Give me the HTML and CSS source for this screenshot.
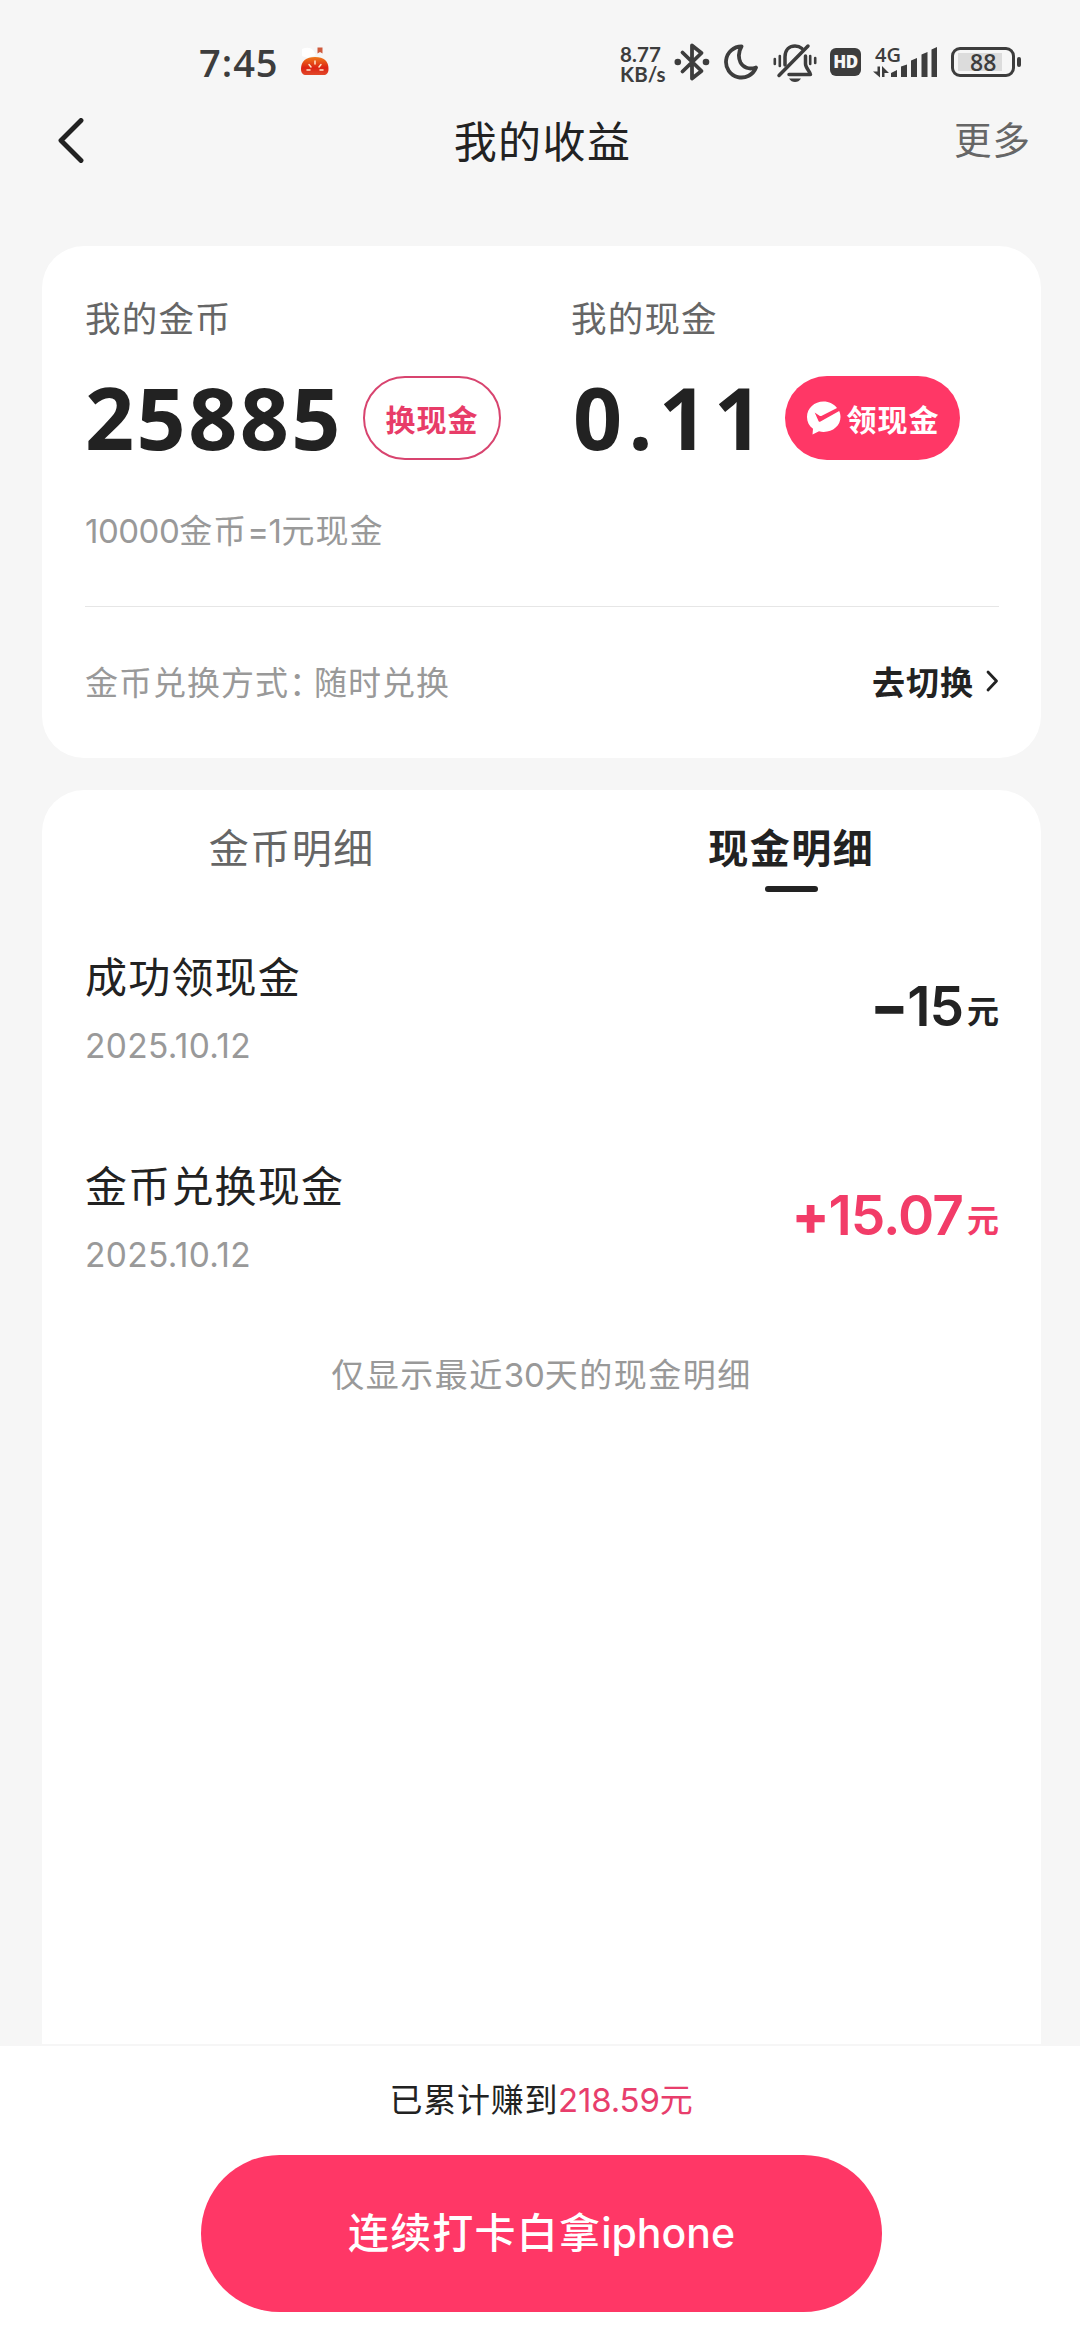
FILE: index.html
```html
<!DOCTYPE html>
<html lang="zh-CN">
<head>
<meta charset="utf-8">
<title>我的收益</title>
<link rel="stylesheet" href="styles.css">
</head>
<body>
<div class="screen">
  <header class="status">
    <div class="status-left">
      <span class="clock">7:45</span>
      <svg class="pumpkin" width="30" height="30" viewBox="0 0 30 30">
        <defs><linearGradient id="pk" x1="0" y1="0" x2="0" y2="1"><stop offset="0" stop-color="#f07a1c"/><stop offset=".6" stop-color="#dc2414"/><stop offset="1" stop-color="#e2492a"/></linearGradient></defs>
        <path d="M2 2q7-3 11 1l3 5-8 3-6-2z" fill="#fff"/>
        <path d="M17.500 0.500h5v6l-2.500-1.500-2.500 1.500z" fill="#cf5a3c"/>
        <path d="M1 22C1 14 6 10 15 10s13.500 4 13.500 12c0 4-2 6-5 6H6c-3 0-5-2-5-6z" fill="url(#pk)"/>
        <path d="M7 23h3M9 17.500l2 2.500M15 14v3M21 17.500l-2 2.500M23 23h-3" stroke="#ffe6cc" stroke-width="1.500" fill="none" stroke-linecap="round"/>
      </svg>
    </div>
    <div class="status-right">
      <div class="speed"><span>8.77</span><span>KB/s</span></div>
      <svg class="i-bt" width="36" height="40" viewBox="0 0 36 40"><path d="M8.500 10.500L27.500 29 18 36.500V3.500L27.500 11 8.500 29.500" fill="none" stroke="#3d3d3d" stroke-width="3.800" stroke-linejoin="round" stroke-linecap="round"/><circle cx="3.800" cy="20" r="3.300" fill="#3d3d3d"/><circle cx="32" cy="20" r="3.300" fill="#3d3d3d"/></svg>
      <svg class="i-moon" width="34" height="36" viewBox="0 0 34 36"><path d="M17.500 2.500A15.500 15.500 0 1 0 32 23.500C25 26 19 23.500 16.500 18.500 14 13 14.500 7.500 17.500 2.500z" fill="none" stroke="#3d3d3d" stroke-width="3.800" stroke-linejoin="round"/></svg>
      <svg class="i-bell" width="44" height="40" viewBox="0 0 44 40"><g fill="none" stroke="#3d3d3d" stroke-width="3.500" stroke-linecap="round" stroke-linejoin="round"><path d="M12 22V14C12 6 17 3 22 3c3 0 5 .8 7 2.500M32.500 13v8c0 4 5 8 5 10.500H16"/><path d="M35 3L6 32.500"/><path d="M1.800 16v5M6.800 13v10M37.200 13v8M42.200 15v5" stroke-width="2.600"/></g><path d="M16 35.500h12c-1.500 2.500-3.500 3.500-6 3.500s-4.500-1-6-3.500z" fill="#3d3d3d"/></svg>
      <span class="hd">HD</span>
      <div class="signal">
        <span class="net">4G</span>
        <svg width="65" height="31" viewBox="0 0 65 31"><g fill="#3d3d3d"><path d="M4.500 19.500h2.500v11L0 24.500h4.500zM9 30h2.500v-4H16L9 19z"/><path d="M18 26l6-3v7h-6zM28 19.500l6-2V30h-6zM38 13.500l6-2.500V30h-6zM48.500 7.500l6-2.500V30h-6zM58.500 2.500L64 0v30h-5.500z"/></g></svg>
      </div>
      <div class="battery"><span class="battery-shell"><span class="battery-level">88</span></span><i class="battery-nub"></i></div>
    </div>
  </header>

  <nav class="nav">
    <svg class="back" width="27" height="45" viewBox="0 0 27 45"><path d="M24 2.500L4 22.500l20 20" fill="none" stroke="#222" stroke-width="4.900" stroke-linecap="round" stroke-linejoin="round"/></svg>
    <h1 class="nav-title">我的收益</h1>
    <span class="nav-more">更多</span>
  </nav>

  <section class="card wallet">
    <div class="balances">
      <div class="balance coins">
        <div class="label">我的金币</div>
        <div class="figure"><span class="num">25885</span><span class="pill outline">换现金</span></div>
      </div>
      <div class="balance cash">
        <div class="label">我的现金</div>
        <div class="figure"><span class="num">0.11</span><span class="pill solid">
          <svg width="36" height="36" viewBox="0 0 36 36"><path d="M17.500 1.500C8.500 1.500 1 8 1 17c0 5 2.200 9 6 11.800L6.500 34.500l6.500-3.200c1.500.4 3 .6 4.500.6C27 32 34.500 25.500 34.500 17c0-2.200-.5-4.200-1.300-6L14.500 21.500c-.9.5-1.500.3-2-.6L8.700 12.500l4.800 3.300c.6.4 1.200.4 1.800.1L31 8C28 4 23 1.500 17.500 1.500z" fill="#fff"/></svg>领现金</span></div>
      </div>
    </div>
    <p class="rate"><span class="digits">10000</span>金币<span class="digits">=1</span>元现金</p>
    <div class="mode">
      <span class="mode-text">金币兑换方式<span class="colon">：</span>随时兑换</span>
      <span class="switch">去切换<svg width="13" height="22" viewBox="0 0 13 22"><path d="M2 2l8.500 9L2 20" fill="none" stroke="#222" stroke-width="2.800" stroke-linecap="round" stroke-linejoin="round"/></svg></span>
    </div>
  </section>

  <section class="card details">
    <div class="tabs"><span class="tab">金币明细</span><span class="tab active">现金明细</span></div>
    <ul class="records">
      <li class="record">
        <div><div class="record-title">成功领现金</div><div class="record-date">2025.10.12</div></div>
        <div class="amount"><span class="value"><span class="sign">−</span>15</span><span class="unit">元</span></div>
      </li>
      <li class="record">
        <div><div class="record-title">金币兑换现金</div><div class="record-date">2025.10.12</div></div>
        <div class="amount plus"><span class="value"><span class="sign">+</span>15.07</span><span class="unit">元</span></div>
      </li>
    </ul>
    <p class="note">仅显示最近<span class="digits">30</span>天的现金明细</p>
  </section>

  <footer class="footer">
    <p class="total">已累计赚到<em><span class="digits">218.59</span>元</em></p>
    <button class="cta">连续打卡白拿<span class="latin">iphone</span></button>
  </footer>
</div>
</body>
</html>
```

FILE: styles.css
```css
* { box-sizing: border-box; margin: 0; padding: 0; }
body {
  width: 1080px;
  background: #f6f6f6;
  color: #222;
  font-family: Inter, "Noto Sans CJK SC", sans-serif;
}
svg { display: block; flex: none; }
.screen { display: flex; flex-direction: column; height: 2340px; overflow: hidden; }
.digits { letter-spacing: -.2px; }

/* status bar */
.status {
  height: 100px; flex: none;
  display: flex; justify-content: space-between;
  padding: 0 59px 0 199px;
  color: #3d3d3d;
}
.status-left { display: flex; padding-top: 47px; }
.clock { font: 650 38px/30px "Open Sans", sans-serif; width: 101px; letter-spacing: 1px; }
.status-right { display: flex; padding-top: 42px; }
.speed { width: 54px; padding-top: 2px; font: 700 20.5px/20px Lato, sans-serif; letter-spacing: .1px; }
.speed span { display: block; }
.i-moon { margin: 2px 0 0 14px; }
.i-bell { margin: 1px 0 0 15px; }
.hd {
  margin: 6px 0 0 13px; width: 31px; height: 28px; border-radius: 6px;
  background: #3d3d3d; color: #f6f6f6; text-align: center;
  font: 800 17px/28px "Open Sans", sans-serif; letter-spacing: -.5px;
}
.signal { display: grid; margin: 5px 0 0 12px; }
.signal > * { grid-area: 1 / 1; }
.net { font: 600 20px/16px "Open Sans", sans-serif; padding-left: 2px; }
.battery { display: flex; align-items: center; height: 30px; margin: 5px 0 0 13px; gap: 2px; }
.battery-shell { width: 64px; height: 30px; border: 3px solid #3d3d3d; border-radius: 9px; padding: 3px 10px 3px 4px; }
.battery-level { display: block; height: 18px; background: #dcdcdc; padding-left: 12px; font: 600 23px/19px "Open Sans", sans-serif; }
.battery-nub { width: 4px; height: 10px; border-radius: 2px; background: #3d3d3d; }

/* title bar */
.nav {
  height: 146px; flex: none;
  display: grid; grid-template-columns: 1fr auto 1fr; align-items: start;
  padding: 0 49px 0 57px;
}
.back { margin-top: 18px; }
.nav-title { font-size: 43px; font-weight: 400; line-height: 60px; letter-spacing: 1.4px; padding: 12px 3px 0 0; }
.nav-more { justify-self: end; font-size: 37.500px; line-height: 50px; color: #666; letter-spacing: 1px; padding-top: 16px; }

/* cards */
.card { margin: 0 39px 0 42px; background: #fff; border-radius: 42px; flex: none; padding: 0 42px 0 43px; }
.wallet { height: 512px; }
.balances { display: grid; grid-template-columns: 486px 1fr; padding-top: 49px; }
.label { font-size: 35.500px; line-height: 50px; letter-spacing: 1.2px; color: #666; }
.figure { display: flex; align-items: center; margin-top: 31px; height: 84px; }
.num { font: 700 86px/82px "Open Sans", sans-serif; height: 84px; letter-spacing: 2.400px; width: 278px; }
.cash .num { letter-spacing: 6px; padding-left: 2px; width: 214px; }
.pill { display: flex; align-items: center; justify-content: center; height: 84px; border-radius: 42px; font-size: 30px; font-weight: 700; letter-spacing: 1px; }
.outline { width: 138px; border: 2px solid #d8446f; color: #e83c68; }
.solid { width: 175px; background: #ff3766; color: #fff; gap: 5px; }
.rate { margin-top: 46px; font-size: 33px; line-height: 50px; color: #999; letter-spacing: 1px; }
.rate .digits { letter-spacing: -.5px; }
.mode { margin-top: 50px; border-top: 1px solid #e6e6e6; display: flex; justify-content: space-between; align-items: center; height: 149px; font-size: 33px; }
.mode-text { color: #999; letter-spacing: 1px; }
.colon { letter-spacing: -8px; }
.switch { display: flex; align-items: center; gap: 12px; font-weight: 700; letter-spacing: 1px; }

/* records */
.details { margin-top: 32px; height: 1254px; border-radius: 42px 42px 0 0; padding: 0; }
.tabs { display: grid; grid-template-columns: 1fr 1fr; height: 103px; text-align: center; }
.tab { font-size: 40px; line-height: 60px; padding-top: 29px; letter-spacing: 1.500px; color: #666; }
.active { font-weight: 700; color: #222; }
.active::after { content: ""; display: block; width: 53px; height: 6px; border-radius: 3px; margin: 7px auto 0; background: #222; }
.records { list-style: none; padding: 57px 42px 0 43px; }
.record { display: flex; justify-content: space-between; height: 209px; }
.record-title { font-size: 42px; line-height: 56px; letter-spacing: 1.200px; }
.record-date { margin-top: 20px; font-size: 33.500px; line-height: 40px; letter-spacing: .3px; color: #999; }
.amount { display: flex; align-items: flex-start; font-weight: 600; line-height: 60px; padding-top: 26px; height: 90px; }
.value { font-size: 55px; letter-spacing: -1px; }
.sign { font-weight: 800; }
.unit { font-size: 32px; margin: 6px 0 0 4px; }
.plus { color: #f23c68; }
.note { margin-top: -18px; text-align: center; font-size: 33px; line-height: 50px; letter-spacing: 1.500px; color: #999; }

/* bottom bar */
.footer { margin-top: 2px; flex: 1; background: #fff; text-align: center; }
.total { padding-top: 29px; font-size: 33px; line-height: 50px; letter-spacing: .7px; padding-left: 3px; }
.total em { font-style: normal; color: #e83e6c; }
.cta {
  display: block; width: 681px; height: 157px; margin: 30px 198px 0 201px; border: 0; border-radius: 79px;
  background: #ff3766; color: #fff; font: 600 41px/157px Inter, "Noto Sans CJK SC", sans-serif; font-weight: 500; letter-spacing: 1.200px;
}
.latin { letter-spacing: 0; }
```
